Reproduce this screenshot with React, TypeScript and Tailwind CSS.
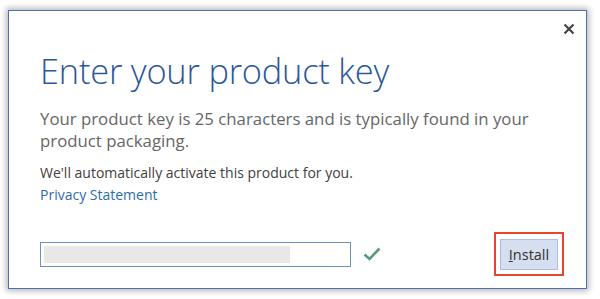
import React from "react";

export default function App() {
  return (
    <div className="w-[600px] h-[299px] bg-white pt-[10px] pl-[8px]" style={{ fontFamily: '"Open Sans", "Noto Sans", sans-serif' }}>
      <div className="relative w-[579px] h-[279px] border border-[#4a6fb5] bg-white shadow-[0_0_6px_2px_rgba(0,0,0,0.28)] pl-[31px] flex flex-col">
        <button className="absolute right-[10px] top-[11px] w-[14px] h-[14px] flex items-center justify-center">
          <svg width="12" height="12" viewBox="0 0 12 12">
            <path d="M1.5 1.5 L10.5 10.5 M10.5 1.5 L1.5 10.5" stroke="#444" strokeWidth="2.2" strokeLinecap="butt" />
          </svg>
        </button>
        <h1 className="mt-[38px] text-[34.4px] leading-[44px] font-light text-[#2b579a] tracking-[-0.2px]">Enter your product key</h1>
        <p className="mt-[15px] text-[16.8px] leading-[22px] text-[#666666] w-[520px]">
          Your product key is 25 characters and is typically found in your product packaging.
        </p>
        <p className="mt-[11px] text-[14px] leading-[20px] text-[#404040]">We'll automatically activate this product for you.</p>
        <a className="mt-[2px] text-[14px] leading-[20px] text-[#2b6cb0] w-fit">Privacy Statement</a>
        <div className="mt-[27px] flex items-start">
          <div className="mt-[10px] w-[311px] h-[25px] border border-[#6c8fd0] p-[3px] flex">
            <div className="w-[246px] h-full bg-[#e8e8e8]" />
          </div>
          <svg className="ml-[12px] mt-[15px]" width="18" height="14" viewBox="0 0 18 14">
            <path d="M1.5 7.5 L6.5 12 L16.5 1.5" stroke="#5a9a78" strokeWidth="2.6" fill="none" />
          </svg>
          <div className="ml-auto mr-[22px] border-2 border-[#e8462a] px-[4px] pt-[5px] pb-[4px]">
            <button className="w-[58px] h-[31px] bg-[#d5dff0] border border-[#a9bfe3] text-[14.5px] text-[#333] flex items-center justify-center">
              <span><span className="underline">I</span>nstall</span>
            </button>
          </div>
        </div>
      </div>
    </div>
  );
}
